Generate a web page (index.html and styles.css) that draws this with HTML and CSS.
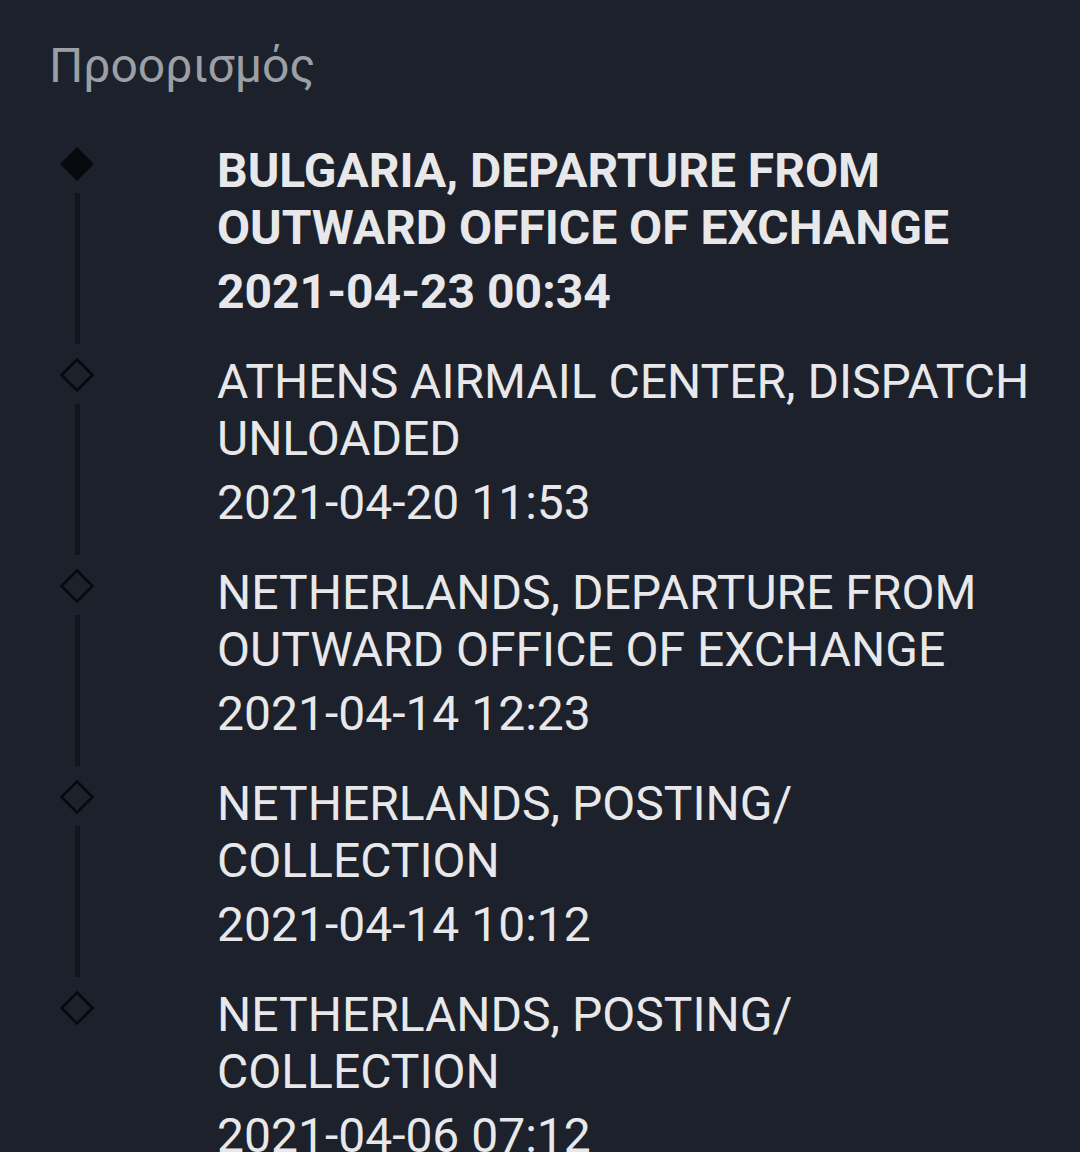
FILE: index.html
```html
<!DOCTYPE html>
<html lang="el">
<head>
<meta charset="utf-8">
<title>Προορισμός</title>
<link rel="stylesheet" href="styles.css">
</head>
<body>
<main class="page">
  <h1 class="heading">Προορισμός</h1>
  <ol class="timeline">
    <li class="event event--current">
      <div class="marker">
        <svg class="diamond" viewBox="0 0 36 36" width="36" height="36"><path d="M18 1 L35 18 L18 35 L1 18 Z" fill="#07090d"/></svg>
        <span class="connector"></span>
      </div>
      <div class="details">
        <p class="title">BULGARIA, DEPARTURE FROM OUTWARD OFFICE OF EXCHANGE</p>
        <p class="date">2021-04-23 00:34</p>
      </div>
    </li>
    <li class="event">
      <div class="marker">
        <svg class="diamond" viewBox="0 0 36 36" width="36" height="36"><path d="M18 2.5 L33.5 18 L18 33.5 L2.5 18 Z" fill="none" stroke="#07090d" stroke-width="2.6"/></svg>
        <span class="connector"></span>
      </div>
      <div class="details">
        <p class="title">ATHENS AIRMAIL CENTER, DISPATCH UNLOADED</p>
        <p class="date">2021-04-20 11:53</p>
      </div>
    </li>
    <li class="event">
      <div class="marker">
        <svg class="diamond" viewBox="0 0 36 36" width="36" height="36"><path d="M18 2.5 L33.5 18 L18 33.5 L2.5 18 Z" fill="none" stroke="#07090d" stroke-width="2.6"/></svg>
        <span class="connector"></span>
      </div>
      <div class="details">
        <p class="title">NETHERLANDS, DEPARTURE FROM OUTWARD OFFICE OF EXCHANGE</p>
        <p class="date">2021-04-14 12:23</p>
      </div>
    </li>
    <li class="event">
      <div class="marker">
        <svg class="diamond" viewBox="0 0 36 36" width="36" height="36"><path d="M18 2.5 L33.5 18 L18 33.5 L2.5 18 Z" fill="none" stroke="#07090d" stroke-width="2.6"/></svg>
        <span class="connector"></span>
      </div>
      <div class="details">
        <p class="title">NETHERLANDS, POSTING/<wbr>COLLECTION</p>
        <p class="date">2021-04-14 10:12</p>
      </div>
    </li>
    <li class="event event--last">
      <div class="marker">
        <svg class="diamond" viewBox="0 0 36 36" width="36" height="36"><path d="M18 2.5 L33.5 18 L18 33.5 L2.5 18 Z" fill="none" stroke="#07090d" stroke-width="2.6"/></svg>
      </div>
      <div class="details">
        <p class="title">NETHERLANDS, POSTING/<wbr>COLLECTION</p>
        <p class="date">2021-04-06 07:12</p>
      </div>
    </li>
  </ol>
</main>
</body>
</html>
```

FILE: styles.css
```css
html, body {
  margin: 0;
  padding: 0;
  background: #1c212b;
  overflow: hidden;
}

.page {
  width: 1080px;
  height: 1152px;
  box-sizing: border-box;
  padding: 37px 40px 0 49px;
  font-family: Roboto, "Noto Sans", "Liberation Sans", sans-serif;
  color: #e8e8ea;
}

.heading {
  margin: 0;
  font-size: 48px;
  line-height: 57px;
  font-weight: 400;
  color: #9c9fa5;
}

.timeline {
  list-style: none;
  margin: 52px 0 0 10px;
  padding: 0;
}

.event {
  display: grid;
  grid-template-columns: 158px 1fr;
  height: 211px;
}

.marker {
  display: flex;
  flex-direction: column;
  align-items: center;
  width: 36px;
}

.diamond {
  display: block;
  flex: none;
}

.connector {
  flex: 1;
  width: 5px;
  margin: 11px 0 13px;
  background: #12151c;
}

.details {
  margin-top: -4px;
}

.title,
.date {
  margin: 0;
  font-size: 48px;
  line-height: 57px;
  font-weight: 400;
}

.date {
  margin-top: 7px;
}

.event--current .title,
.event--current .date {
  font-weight: 700;
}
```
